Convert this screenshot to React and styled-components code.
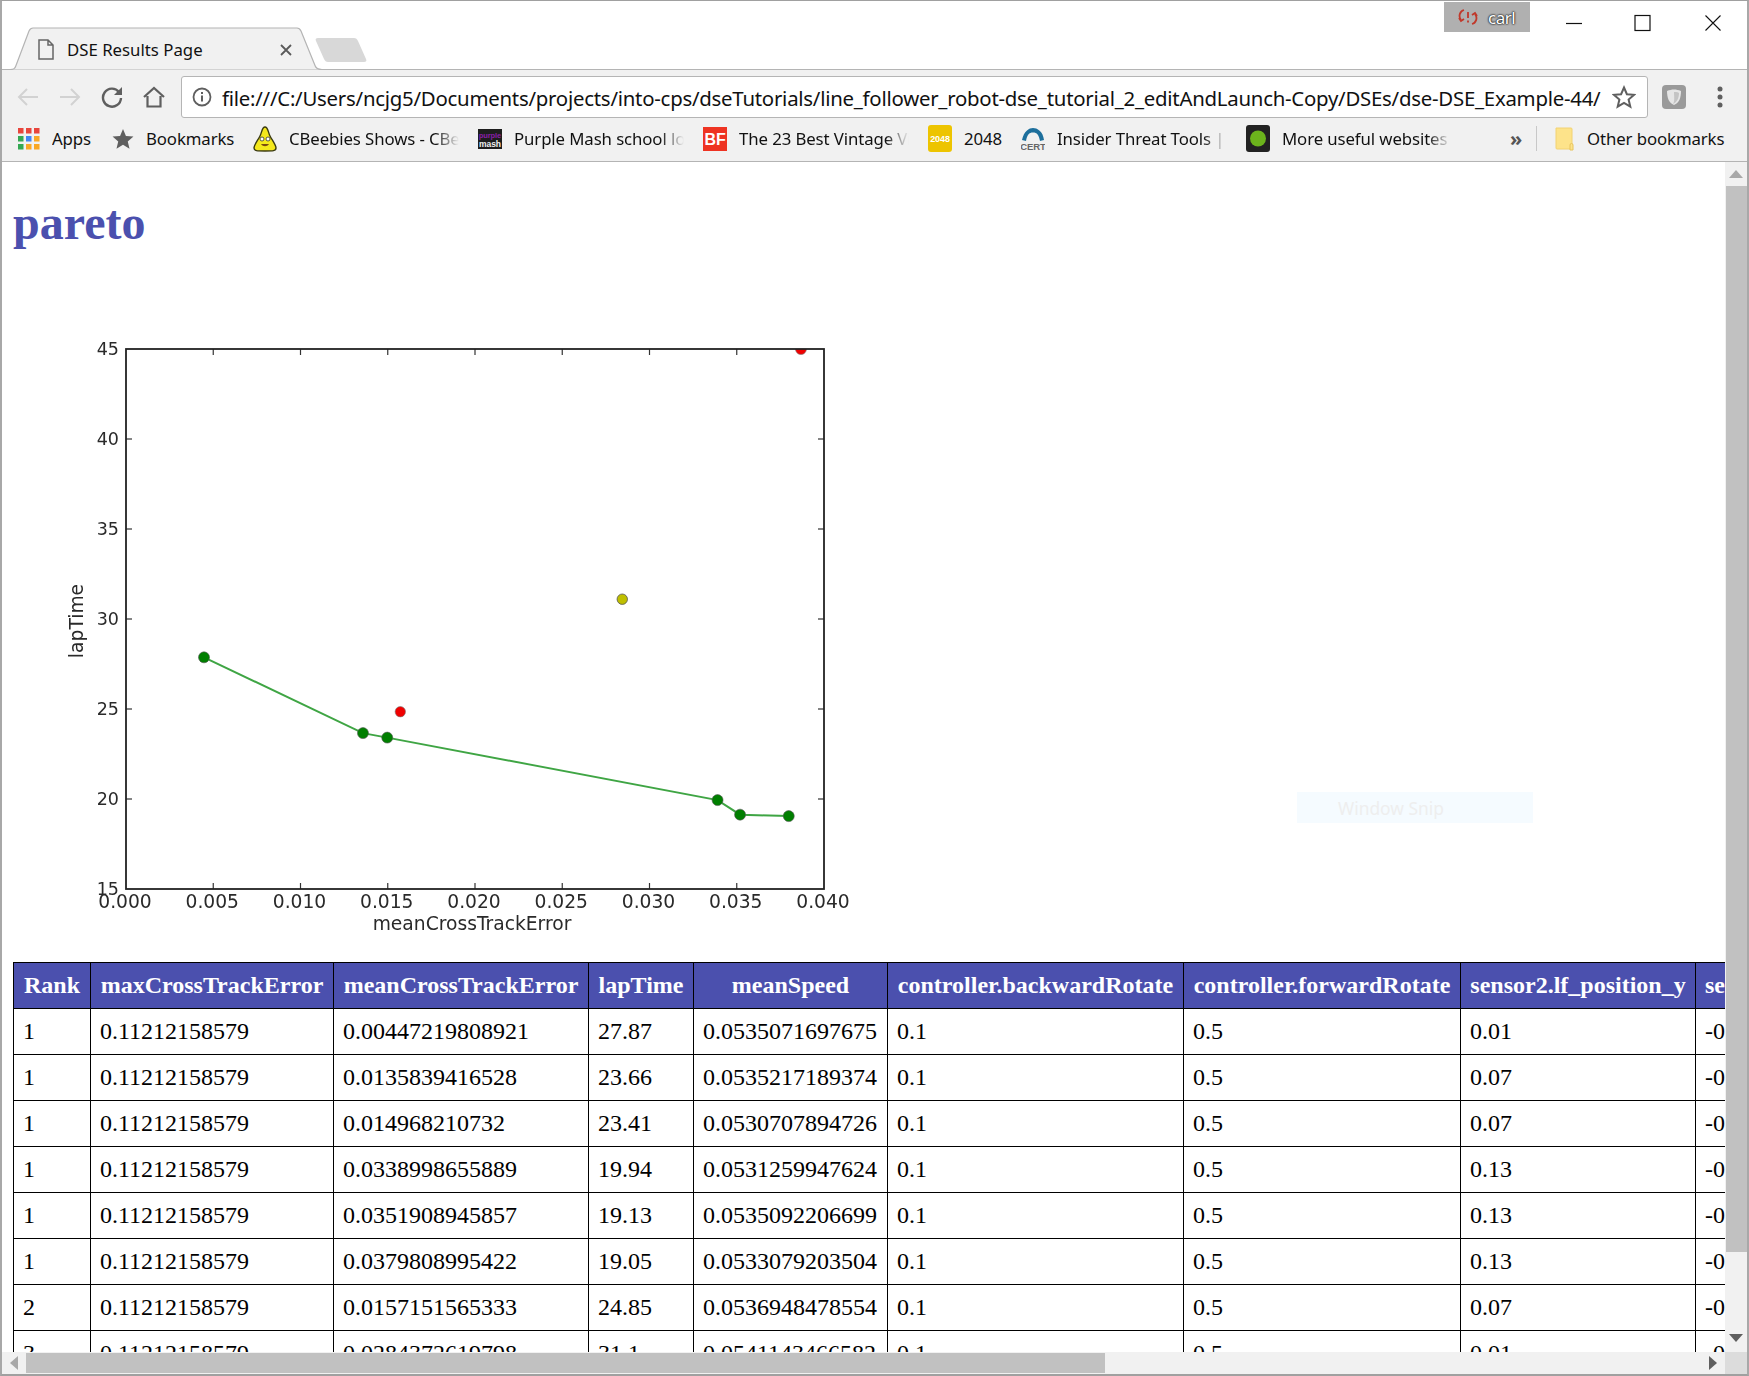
import React from 'react';
import styled, {createGlobalStyle} from 'styled-components';

const Global = createGlobalStyle`
  html, body { margin: 0; padding: 0; height: 100%; overflow: hidden; background: #fff; }
  * { box-sizing: border-box; }
`;

const UI_FONT = `"Noto Sans", "Open Sans", sans-serif`;
const PAGE_FONT = `"Liberation Serif", serif`;
const ACCENT = '#4b50ae';

const Frame = styled.div`
  width: 1749px;
  height: 1376px;
  display: flex;
  flex-direction: column;
  border-top: 1px solid #a0a0a0;
  border-left: 2px solid #a8a8a8;
  border-right: 2px solid #a8a8a8;
  border-bottom: 2px solid #a0a0a0;
  overflow: hidden;
  font-family: ${UI_FONT};
  position: relative;
`;

/* title strip */
const TabStrip = styled.div`
  height: 69px;
  flex: none;
  display: flex;
  align-items: flex-end;
  background: #fff;
  border-bottom: 1px solid #b4b4b4;
  padding-left: 8px;
  position: relative;
`;

const Tab = styled.div`
  width: 312px;
  height: 43px;
  margin-bottom: -1px;
  position: relative;
  display: flex;
  align-items: center;
  padding: 2px 30px 0 28px;
  flex: none;
`;

const TabShape = styled.svg`
  position: absolute;
  left: 0;
  top: 0;
`;

const TabIcon = styled.svg`
  position: relative;
  flex: none;
  margin-right: 13px;
`;

const TabTitle = styled.span`
  position: relative;
  font-size: 16.8px;
  color: #111;
  flex: 1;
  white-space: nowrap;
`;

const TabClose = styled.svg`
  position: relative;
  flex: none;
`;

const NewTab = styled.svg`
  flex: none;
  margin: 0 0 6px -7px;
`;

const UserBadge = styled.div`
  position: absolute;
  top: 1px;
  left: 1442px;
  width: 86px;
  height: 30px;
  background: #b0b0b0;
  display: flex;
  align-items: center;
  padding-left: 14px;
  gap: 10px;
  color: #fff;
  font-size: 17px;
  text-shadow: 0 0 2px #222, 0 0 2px #222, 0 0 1px #222;
  letter-spacing: -0.5px;
`;

const WindowControls = styled.div`
  position: absolute;
  top: 13px;
  left: 1562px;
  display: flex;
`;

const WindowIcon = styled.svg`
  flex: none;
  margin-left: ${p => p.$gap}px;
`;

/* toolbar */
const Toolbar = styled.div`
  height: 48px;
  flex: none;
  background: #f1f1f1;
  display: flex;
  align-items: center;
  padding: 6px 0 0 15px;
`;

const NavButton = styled.svg`
  flex: none;
  margin-right: ${p => p.$gap}px;
`;

const AddressBar = styled.div`
  width: 1467px;
  height: 42px;
  margin-left: 3px;
  flex: none;
  background: #fff;
  border: 1px solid #b5b5b5;
  border-radius: 3px;
  display: flex;
  align-items: center;
  padding: 0 11px 0 10px;
`;

const Url = styled.span`
  flex: 1;
  margin-left: 10px;
  padding-top: 1px;
  font-size: 20.4px;
  letter-spacing: -0.25px;
  color: #111;
  white-space: nowrap;
  overflow: hidden;
`;

const ToolbarEnd = styled.div`
  display: flex;
  align-items: center;
  margin-left: 14px;
  gap: 30px;
`;

/* bookmarks */
const BookmarksBar = styled.div`
  height: 44px;
  flex: none;
  background: #f1f1f1;
  border-bottom: 1px solid #b4b4b4;
  display: flex;
  align-items: center;
  padding: 0 0 2px 16px;
  font-size: 16.8px;
  letter-spacing: -0.1px;
  color: #111;
`;

const Bookmark = styled.div`
  display: flex;
  align-items: center;
  gap: 12px;
  flex: none;
  width: ${p => p.$w}px;
  padding-right: ${p => (p.$fade ? 19 : 0)}px;
`;

const BookmarkLabel = styled.span`
  white-space: nowrap;
  overflow: hidden;
  flex: 1;
  ${p => p.$fade && `
    -webkit-mask-image: linear-gradient(to right, #000 86%, transparent 100%);
    mask-image: linear-gradient(to right, #000 86%, transparent 100%);
  `}
`;

const Chevrons = styled.span`
  flex: none;
  width: 22px;
  font-size: 20px;
  font-weight: bold;
  color: #555;
  margin-left: 40px;
`;

const BarDivider = styled.div`
  width: 1px;
  height: 25px;
  background: #c8c8c8;
  margin: 0 18px 0 4px;
  flex: none;
`;

/* page viewport */
const Viewport = styled.div`
  flex: 1;
  min-height: 0;
  display: grid;
  grid-template-columns: 1fr 22px;
  grid-template-rows: 1fr 22px;
`;

const Page = styled.div`
  overflow: hidden;
  background: #fff;
  padding: 0 0 0 11px;
  font-family: ${PAGE_FONT};
  min-width: 0;
`;

const Heading = styled.h1`
  margin: 33px 0 0;
  font-size: 48px;
  line-height: 55px;
  font-weight: bold;
  color: ${ACCENT};
`;

const ChartSvg = styled.svg`
  display: block;
  margin: 87px 0 0 -13px;
  filter: blur(0.35px);
`;

const Results = styled.table`
  border-collapse: collapse;
  table-layout: fixed;
  width: 1860px;
  font-size: 24px;
  color: #000;
`;

const HeadCell = styled.th`
  background: ${ACCENT};
  color: #fff;
  border: 1px solid #000;
  height: 46px;
  padding: 0 9px;
  font-weight: bold;
  text-align: center;
  white-space: nowrap;
  overflow: hidden;
`;

const Cell = styled.td`
  border: 1px solid #000;
  height: 46px;
  padding: 0 9px;
  white-space: nowrap;
  overflow: hidden;
`;

/* scrollbars */
const VBar = styled.div`
  background: #f1f1f1;
  display: flex;
  flex-direction: column;
  align-items: stretch;
`;

const HBar = styled.div`
  background: #f1f1f1;
  display: flex;
  align-items: center;
`;

const Corner = styled.div`
  background: #dcdcdc;
`;

const Thumb = styled.div`
  background: #c1c1c1;
  flex: none;
  ${p => p.$vertical ? `height: ${p.$size}px; margin-left: 1px;` : `width: ${p.$size}px; align-self: stretch; margin: 1px 0;`}
`;

const Spacer = styled.div`
  flex: 1;
`;

const ArrowBox = styled.div`
  flex: none;
  display: flex;
  align-items: center;
  justify-content: center;
  width: ${p => p.$w}px;
  height: ${p => p.$h}px;
`;

const SnipHint = styled.div`
  position: absolute;
  left: 1295px;
  top: 791px;
  width: 236px;
  height: 31px;
  background: #f5fbff;
  color: #eeeeee;
  font-size: 17.4px;
  line-height: 32px;
  padding-left: 41px;
`;

const COLS = [77, 243, 255, 105, 194, 296, 277, 235, 178];
const HEADERS = ['Rank', 'maxCrossTrackError', 'meanCrossTrackError', 'lapTime', 'meanSpeed', 'controller.backwardRotate', 'controller.forwardRotate', 'sensor2.lf_position_y', 'sensor1.lf_position_y'];
const ROWS = [
  [1, '0.00447219808921', '27.87', '0.0535071697675', '0.01'],
  [1, '0.0135839416528', '23.66', '0.0535217189374', '0.07'],
  [1, '0.014968210732', '23.41', '0.0530707894726', '0.07'],
  [1, '0.0338998655889', '19.94', '0.0531259947624', '0.13'],
  [1, '0.0351908945857', '19.13', '0.0535092206699', '0.13'],
  [1, '0.0379808995422', '19.05', '0.0533079203504', '0.13'],
  [2, '0.0157151565333', '24.85', '0.0536948478554', '0.07'],
  [3, '0.0284372619798', '31.1', '0.0541143466582', '0.01'],
];

const BOOKMARKS_ICON = {
  apps: (
    <svg width="22" height="22" viewBox="0 0 22 22">
      {[['#e8453c', '#e8453c', '#e8453c'], ['#34a853', '#4285f4', '#f9a825'], ['#34a853', '#f9a825', '#f9a825']].map((row, r) =>
        row.map((c, i) => <rect key={r + '-' + i} x={i * 8} y={r * 8} width="5.5" height="5.5" fill={c} />)
      )}
    </svg>
  ),
  star: (
    <svg width="22" height="22" viewBox="0 0 24 24"><path d="M12 1l3.2 7.6 8.2.7-6.2 5.4 1.9 8L12 18.4 4.9 22.7l1.9-8L.6 9.3l8.2-.7z" fill="#5f5f5f" /></svg>
  ),
  cbeebies: (
    <svg width="24" height="26" viewBox="0 0 24 26">
      <path d="M12 1c3 0 3 5 5 9s6 9 6 12-3 3-11 3-11 0-11-3 4-8 6-12 2-9 5-9z" fill="#f4e81c" stroke="#3a3a10" strokeWidth="1.4" />
      <circle cx="9" cy="13" r="2" fill="#fff" stroke="#333" strokeWidth=".8" /><circle cx="15" cy="13" r="2" fill="#fff" stroke="#333" strokeWidth=".8" />
      <path d="M8 18c2 3 6 3 8 0z" fill="#7a4a10" />
    </svg>
  ),
  purple: (
    <svg width="24" height="24" viewBox="0 0 24 24">
      <rect x="0" y="2" width="24" height="20" fill="#1d1d1d" />
      <text x="12" y="11" textAnchor="middle" fontFamily="Liberation Sans, sans-serif" fontWeight="bold" fontSize="7.500" fill="#8a1fa8">purple</text>
      <text x="12" y="20" textAnchor="middle" fontFamily="Liberation Sans, sans-serif" fontWeight="bold" fontSize="8.500" fill="#f0f0f0">mash</text>
    </svg>
  ),
  bf: (
    <svg width="24" height="24" viewBox="0 0 24 24">
      <rect width="24" height="24" fill="#ee3322" />
      <text x="12" y="18" textAnchor="middle" fontFamily="Liberation Sans, sans-serif" fontWeight="bold" fontSize="16" fill="#fff">BF</text>
    </svg>
  ),
  game: (
    <svg width="24" height="27" viewBox="0 0 24 27">
      <rect width="24" height="27" rx="3" fill="#edc400" />
      <text x="12" y="17" textAnchor="middle" fontFamily="Liberation Sans, sans-serif" fontWeight="bold" fontSize="9" fill="#fff">2048</text>
    </svg>
  ),
  cert: (
    <svg width="24" height="26" viewBox="0 0 24 26">
      <path d="M1 14C3 5 8 2 12 2s10 3 11 12l-4 1C18 9 16 6.500 12 6.500S6 9 5 15z" fill="#1d6f9c" />
      <text x="12" y="24" textAnchor="middle" fontFamily="Liberation Sans, sans-serif" fontWeight="bold" fontSize="9.500" fill="#666">CERT</text>
    </svg>
  ),
  green: (
    <svg width="24" height="27" viewBox="0 0 24 27">
      <rect width="24" height="27" rx="3" fill="#222" />
      <circle cx="12" cy="13.500" r="8" fill="#6cb41c" />
    </svg>
  ),
  folder: (
    <svg width="20" height="24" viewBox="0 0 20 24">
      <path d="M1 1h15a1 1 0 011 1v20H2a1 1 0 01-1-1z" fill="#fde38a" stroke="#f2d272" />
      <path d="M15 23v-5a1.500 1.500 0 013 0v5z" fill="#fde38a" stroke="#e8c45c" />
    </svg>
  ),
};

const BOOKMARKS = [
  {icon: 'apps', label: 'Apps', w: 94},
  {icon: 'star', label: 'Bookmarks', w: 141},
  {icon: 'cbeebies', label: 'CBeebies Shows - CBeebies', w: 225, fade: true},
  {icon: 'purple', label: 'Purple Mash school login', w: 225, fade: true},
  {icon: 'bf', label: 'The 23 Best Vintage Video', w: 225, fade: true},
  {icon: 'game', label: '2048', w: 93},
  {icon: 'cert', label: 'Insider Threat Tools | CERT', w: 225, fade: true},
  {icon: 'green', label: 'More useful websites', w: 224, fade: true},
];

/* chart helpers, coordinates are relative to the svg */
const OX = 126;
const OY = 12;
const W = 698;
const H = 540;
const px = x => OX + (x / 0.04) * W;
const py = y => OY + ((45 - y) / 30) * H;

const FRONT = [[0.00447, 27.87], [0.01358, 23.66], [0.01497, 23.41], [0.0339, 19.94], [0.03519, 19.13], [0.03798, 19.05]];

const Chart = () => {
  const xTicks = [0, 0.005, 0.01, 0.015, 0.02, 0.025, 0.03, 0.035, 0.04];
  const yTicks = [15, 20, 25, 30, 35, 40, 45];
  return (
    <ChartSvg width="880" height="625" viewBox="0 0 880 625">
      <g stroke="#333" strokeWidth="1.200">
        {xTicks.slice(1, -1).map(t => (
          <g key={t}>
            <line x1={px(t)} x2={px(t)} y1={OY} y2={OY + 6} />
            <line x1={px(t)} x2={px(t)} y1={OY + H} y2={OY + H - 6} />
          </g>
        ))}
        {yTicks.slice(1, -1).map(t => (
          <g key={t}>
            <line x1={OX} x2={OX + 6} y1={py(t)} y2={py(t)} />
            <line x1={OX + W} x2={OX + W - 6} y1={py(t)} y2={py(t)} />
          </g>
        ))}
      </g>
      <polyline points={FRONT.map(([x, y]) => `${px(x)},${py(y)}`).join(' ')} fill="none" stroke="#3fa544" strokeWidth="2" />
      {FRONT.map(([x, y]) => <circle key={x} cx={px(x)} cy={py(y)} r="5.500" fill="#007f00" stroke="#555" strokeWidth=".6" />)}
      <circle cx={px(0.01572)} cy={py(24.85)} r="5.200" fill="#f00000" stroke="#777" strokeWidth=".6" />
      <circle cx={px(0.02844)} cy={py(31.1)} r="5.200" fill="#bfbf00" stroke="#555" strokeWidth=".8" />
      <svg x={OX} y={OY} width={W} height={H}>
        <circle cx={px(0.03868) - OX} cy="0" r="5.500" fill="#f00000" stroke="#777" strokeWidth=".6" />
      </svg>
      <rect x={OX} y={OY} width={W} height={H} fill="none" stroke="#222" strokeWidth="1.800" />
      <g fontFamily="DejaVu Sans, sans-serif" fontSize="18.700" fill="#2a2a2a">
        {yTicks.map(t => <text key={t} x={OX - 7} y={py(t) + 6} textAnchor="end" fontSize="17.500">{t}</text>)}
        {xTicks.map(t => <text key={t} x={px(t) - 1} y={OY + H + 19} textAnchor="middle">{t.toFixed(3)}</text>)}
        <text x={472} y={OY + H + 41} textAnchor="middle">meanCrossTrackError</text>
        <text transform={`translate(83 ${OY + 272}) rotate(-90)`} textAnchor="middle">lapTime</text>
      </g>
    </ChartSvg>
  );
};

const App = () => (
  <>
    <Global />
    <Frame>
      <TabStrip>
        <Tab>
          <TabShape width="312" height="43" viewBox="0 0 312 43">
            <path d="M0 42.500c4 0 5-1 6-4L19 4c1-2 2-3 4-3h264c2 0 3 1 4 3l14 34.500c1 3 3 4 7 4" fill="#f1f1f1" stroke="#b4b4b4" strokeWidth="1.200" />
          </TabShape>
          <TabIcon width="16" height="21" viewBox="0 0 16 21">
            <path d="M1 1h9l5 5v14H1z M10 1v5h5" fill="none" stroke="#666" strokeWidth="1.500" />
          </TabIcon>
          <TabTitle>DSE Results Page</TabTitle>
          <TabClose width="12" height="12" viewBox="0 0 12 12">
            <path d="M1 1l10 10M11 1L1 11" stroke="#5a5a5a" strokeWidth="1.800" />
          </TabClose>
        </Tab>
        <NewTab width="52" height="26" viewBox="0 0 52 26">
          <path d="M3 1h36c2 0 3 1 4 3l8 18c1 2 0 3-2 3H13c-2 0-3-1-4-3L1 4C0 2 1 1 3 1z" fill="#d8d8d8" />
        </NewTab>
        <UserBadge>
          <svg width="20" height="18" viewBox="0 0 20 18" fill="none" stroke="#c0392b" strokeWidth="1.800">
            <path d="M6 2C2 3 0 8 3 12M14 16c4-1 6-6 3-10" />
            <path d="M1 10l2 3 3-2M19 8l-2-3-3 2" />
            <path d="M10 4v6M10 12.500v2" />
          </svg>
          <span>carl</span>
        </UserBadge>
        <WindowControls>
          <WindowIcon $gap={0} width="20" height="18" viewBox="0 0 20 18"><path d="M2 9.500h16" stroke="#111" strokeWidth="1.200" /></WindowIcon>
          <WindowIcon $gap={48} width="20" height="18" viewBox="0 0 20 18"><rect x="3" y="1.500" width="15" height="15" fill="none" stroke="#111" strokeWidth="1.200" /></WindowIcon>
          <WindowIcon $gap={51} width="20" height="18" viewBox="0 0 20 18"><path d="M2.500 1.500l15 15M17.500 1.500l-15 15" stroke="#111" strokeWidth="1.100" /></WindowIcon>
        </WindowControls>
      </TabStrip>

      <Toolbar>
        <NavButton $gap={20} width="22" height="20" viewBox="0 0 22 20">
          <path d="M21 10H3M10 2l-8 8 8 8" fill="none" stroke="#d2d2d2" strokeWidth="2" />
        </NavButton>
        <NavButton $gap={20} width="22" height="20" viewBox="0 0 22 20">
          <path d="M1 10h18M12 2l8 8-8 8" fill="none" stroke="#d2d2d2" strokeWidth="2" />
        </NavButton>
        <NavButton $gap={20} width="22" height="22" viewBox="0 0 22 22">
          <path d="M18 6A9 9 0 1 0 20 12" fill="none" stroke="#5f5f5f" strokeWidth="2.400" />
          <path d="M21 1v8h-8z" fill="#5f5f5f" />
        </NavButton>
        <NavButton $gap={13} width="22" height="22" viewBox="0 0 22 22">
          <path d="M1 11L11 2l10 9M4.500 10v10.500h13V10" fill="none" stroke="#5f5f5f" strokeWidth="2.200" />
        </NavButton>
        <AddressBar>
          <svg width="20" height="20" viewBox="0 0 20 20" style={{flex: 'none'}}>
            <circle cx="10" cy="10" r="8.500" fill="none" stroke="#5f5f5f" strokeWidth="1.800" />
            <path d="M10 8.500v6M10 5v2" stroke="#5f5f5f" strokeWidth="2" />
          </svg>
          <Url>file:///C:/Users/ncjg5/Documents/projects/into-cps/dseTutorials/line_follower_robot-dse_tutorial_2_editAndLaunch-Copy/DSEs/dse-DSE_Example-44/</Url>
          <svg width="24" height="24" viewBox="0 0 24 24" style={{flex: 'none'}}>
            <path d="M12 2.500l2.900 6.700 7.200.6-5.500 4.700 1.700 7.100-6.300-3.800-6.300 3.800 1.700-7.100L1.900 9.800l7.200-.6z" fill="none" stroke="#5f5f5f" strokeWidth="2" />
          </svg>
        </AddressBar>
        <ToolbarEnd>
          <svg width="24" height="24" viewBox="0 0 24 24">
            <rect width="24" height="24" rx="4" fill="#9a9a9a" />
            <path d="M5 6c5-2 9-2 14 0 0 7-2 12-7 14-5-2-7-7-7-14z" fill="#e6e6e6" />
            <path d="M12 7c3 0 5 .5 5 1 0 5-2 9-6 11 2-3 1-8 1-12z" fill="#c4c4c4" />
          </svg>
          <svg width="8" height="22" viewBox="0 0 8 22" fill="#5f5f5f">
            <circle cx="4" cy="3" r="2.500" /><circle cx="4" cy="11" r="2.500" /><circle cx="4" cy="19" r="2.500" />
          </svg>
        </ToolbarEnd>
      </Toolbar>

      <BookmarksBar>
        {BOOKMARKS.map(b => (
          <Bookmark key={b.label} $w={b.w} $fade={b.fade}>
            {BOOKMARKS_ICON[b.icon]}
            <BookmarkLabel $fade={b.fade}>{b.label}</BookmarkLabel>
          </Bookmark>
        ))}
        <Chevrons>»</Chevrons>
        <BarDivider />
        <Bookmark $w={175}>
          {BOOKMARKS_ICON.folder}
          <BookmarkLabel>Other bookmarks</BookmarkLabel>
        </Bookmark>
      </BookmarksBar>

      <Viewport>
        <Page>
          <Heading>pareto</Heading>
          <Chart />
          <Results>
            <colgroup>
              {COLS.map((w, i) => <col key={i} style={{width: w}} />)}
            </colgroup>
            <thead>
              <tr>{HEADERS.map(h => <HeadCell key={h}>{h}</HeadCell>)}</tr>
            </thead>
            <tbody>
              {ROWS.map(r => (
                <tr key={r[1]}>
                  <Cell>{r[0]}</Cell>
                  <Cell>0.11212158579</Cell>
                  <Cell>{r[1]}</Cell>
                  <Cell>{r[2]}</Cell>
                  <Cell>{r[3]}</Cell>
                  <Cell>0.1</Cell>
                  <Cell>0.5</Cell>
                  <Cell>{r[4]}</Cell>
                  <Cell>-0.03</Cell>
                </tr>
              ))}
            </tbody>
          </Results>
        </Page>
        <VBar>
          <ArrowBox $w={22} $h={24}>
            <svg width="14" height="8" viewBox="0 0 14 8"><path d="M7 0l7 8H0z" fill="#a8a8a8" /></svg>
          </ArrowBox>
          <Thumb $vertical $size={1066} />
          <Spacer />
          <ArrowBox $w={22} $h={28}>
            <svg width="14" height="8" viewBox="0 0 14 8"><path d="M7 8L0 0h14z" fill="#5f5f5f" /></svg>
          </ArrowBox>
        </VBar>
        <HBar>
          <ArrowBox $w={24} $h={22}>
            <svg width="8" height="14" viewBox="0 0 8 14"><path d="M0 7l8-7v14z" fill="#a8a8a8" /></svg>
          </ArrowBox>
          <Thumb $size={1079} />
          <Spacer />
          <ArrowBox $w={24} $h={22}>
            <svg width="8" height="14" viewBox="0 0 8 14"><path d="M8 7L0 0v14z" fill="#5f5f5f" /></svg>
          </ArrowBox>
        </HBar>
        <Corner />
      </Viewport>
      <SnipHint>Window Snip</SnipHint>
    </Frame>
  </>
);

export default App;
